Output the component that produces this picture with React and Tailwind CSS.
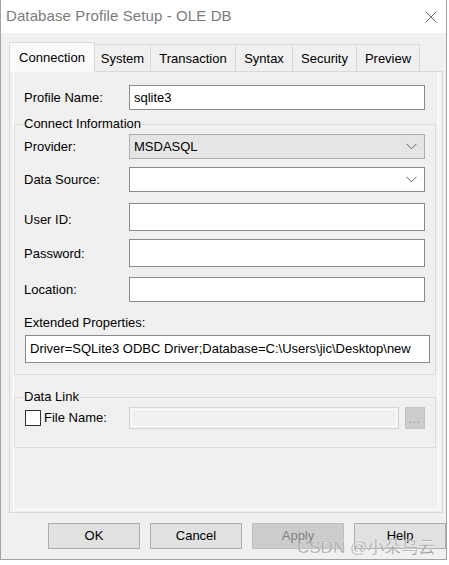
import React from 'react';

const ui = { fontFamily: '"Liberation Sans", Arial, sans-serif' };

function Chevron() {
  return (
    <svg width="11" height="7" viewBox="0 0 11 7" className="shrink-0">
      <polyline points="0.5,0.8 5.5,5.8 10.5,0.8" fill="none" stroke="#5f5f5f" strokeWidth="1" />
    </svg>
  );
}

function Field({ label, h = 25, mt = 0, value = '', labelMt = 0 }) {
  return (
    <div className="flex items-center" style={{ marginTop: mt }}>
      <span className="w-[114px] pl-[9px] text-[13px] text-[#000]" style={{ marginTop: labelMt }}>{label}</span>
      <div className="w-[296px] bg-white border border-[#8a8a8a] flex items-center px-[4px] text-[13px]" style={{ height: h }}>
        {value}
      </div>
    </div>
  );
}

function Combo({ label, value = '', gray = false, mt = 0 }) {
  return (
    <div className="flex items-center" style={{ marginTop: mt }}>
      <span className="w-[114px] pl-[9px] text-[13px]">{label}</span>
      <div
        className={
          'w-[296px] h-[25px] border flex items-center justify-between pl-[4px] pr-[7px] text-[13px] ' +
          (gray ? 'bg-[#e5e5e5] border-[#adadad]' : 'bg-white border-[#8a8a8a]')
        }
      >
        <span>{value}</span>
        <Chevron />
      </div>
    </div>
  );
}

const tabs = [
  { name: 'Connection', w: 86 },
  { name: 'System', w: 56 },
  { name: 'Transaction', w: 85 },
  { name: 'Syntax', w: 57 },
  { name: 'Security', w: 64 },
  { name: 'Preview', w: 63 },
];

export default function App() {
  return (
    <div className="w-[449px] h-[565px] bg-white relative overflow-hidden" style={ui}>
      <div className="w-[447px] h-[560px] bg-[#f0f0f0] border-x border-b border-[#a3a3a3] flex flex-col">
        {/* title bar */}
        <div className="h-[33px] bg-white flex items-center justify-between pl-[5px] pr-[9px] shrink-0">
          <span className="text-[15px] text-[#7b7b7b] tracking-[0.1px]">Database Profile Setup - OLE DB</span>
          <svg width="12" height="12" viewBox="0 0 12 12">
            <path d="M0.5 0.5 L11.5 11.5 M11.5 0.5 L0.5 11.5" stroke="#6e6e6e" strokeWidth="1" />
          </svg>
        </div>

        {/* tabs */}
        <div className="h-[29px] mt-[9px] pl-[8px] flex items-end shrink-0">
          {tabs.map((t, i) =>
            i === 0 ? (
              <div
                key={t.name}
                className="h-[30px] -mb-px relative z-10 bg-[#f9f9f9] border-x border-t border-[#d9d9d9] flex items-start justify-center pt-[5px] text-[13px]"
                style={{ width: t.w }}
              >
                {t.name}
              </div>
            ) : (
              <div
                key={t.name}
                className="h-[27px] bg-[#f0f0f0] border-t border-r border-[#d9d9d9] flex items-center justify-center pt-[2px] text-[13px]"
                style={{ width: t.w }}
              >
                {t.name}
              </div>
            )
          )}
        </div>

        {/* panel */}
        <div className="ml-[8px] w-[434px] h-[442px] border border-[#d9d9d9] px-[3px] pb-[2px] flex shrink-0">
          <div className="flex-1 border-x border-b border-white flex flex-col">
            {/* profile name */}
            <div className="flex items-center mt-[13px]">
              <span className="w-[115px] pl-[10px] text-[13px]">Profile Name:</span>
              <div className="w-[296px] h-[25px] bg-white border border-[#8a8a8a] flex items-center px-[4px] text-[13px]">
                sqlite3
              </div>
            </div>

            {/* Connect Information */}
            <fieldset className="mt-[6px] w-[422px] border border-[#dcdcdc] pb-[11px]">
              <legend className="ml-[8px] px-[1px] h-[16px] leading-[16px] text-[13px]">Connect Information</legend>
              <Combo label="Provider:" value="MSDASQL" gray mt={2} />
              <Combo label="Data Source:" mt={8} />
              <Field label="User ID:" h={28} mt={11} labelMt={6} />
              <Field label="Password:" h={28} mt={8} labelMt={2} />
              <Field label="Location:" h={25} mt={10} />
              <div className="mt-[13px] pl-[9px] h-[16px] leading-[16px] text-[13px]">Extended Properties:</div>
              <div className="mt-[4px] ml-[10px] w-[405px] h-[28px] bg-white border border-[#8a8a8a] flex items-center pl-[4px] text-[13px] overflow-hidden whitespace-nowrap">
                Driver=SQLite3 ODBC Driver;Database=C:\Users\jic\Desktop\new
              </div>
            </fieldset>

            {/* Data Link */}
            <fieldset className="mt-[14px] w-[422px] border border-[#dcdcdc] pb-[18px]">
              <legend className="ml-[8px] px-[1px] h-[16px] leading-[16px] text-[13px]">Data Link</legend>
              <div className="flex items-center mt-[2px] h-[22px]">
                <div className="ml-[10px] w-[16px] h-[16px] bg-white border border-[#333333] shrink-0" />
                <span className="ml-[3px] w-[85px] text-[13px]">File Name:</span>
                <div className="w-[270px] h-[22px] border border-[#d4d4d4] bg-[#f0f0f0] p-px">
                  <div className="w-full h-full border border-white" />
                </div>
                <div className="ml-[6px] w-[20px] h-[22px] bg-[#cccccc] border border-[#c4c4c4] flex items-end justify-center pb-[3px]">
                  <span className="text-[10px] leading-[10px] text-[#8b8b8b] tracking-[1px]">...</span>
                </div>
              </div>
            </fieldset>
          </div>
        </div>

        {/* buttons */}
        <div className="mt-[10px] ml-[47px] flex gap-[10px]">
          {['OK', 'Cancel', 'Apply', 'Help'].map((b) => (
            <div
              key={b}
              className={
                'w-[92px] h-[26px] border flex items-center justify-center text-[13px] ' +
                (b === 'Apply'
                  ? 'bg-[#cccccc] border-[#bfbfbf] text-[#838383]'
                  : 'bg-[#e1e1e1] border-[#adadad] text-black')
              }
            >
              {b}
            </div>
          ))}
        </div>
      </div>

      {/* watermark */}
      <div
        className="absolute left-[297px] top-[537px] text-[17px] leading-[22px] text-[#9a9a9a] whitespace-nowrap"
        style={{ fontFamily: '"Liberation Sans", "Noto Sans CJK SC", sans-serif', WebkitTextStroke: '0.3px #ffffff' }}
      >
        CSDN @小朵乌云
      </div>
    </div>
  );
}
